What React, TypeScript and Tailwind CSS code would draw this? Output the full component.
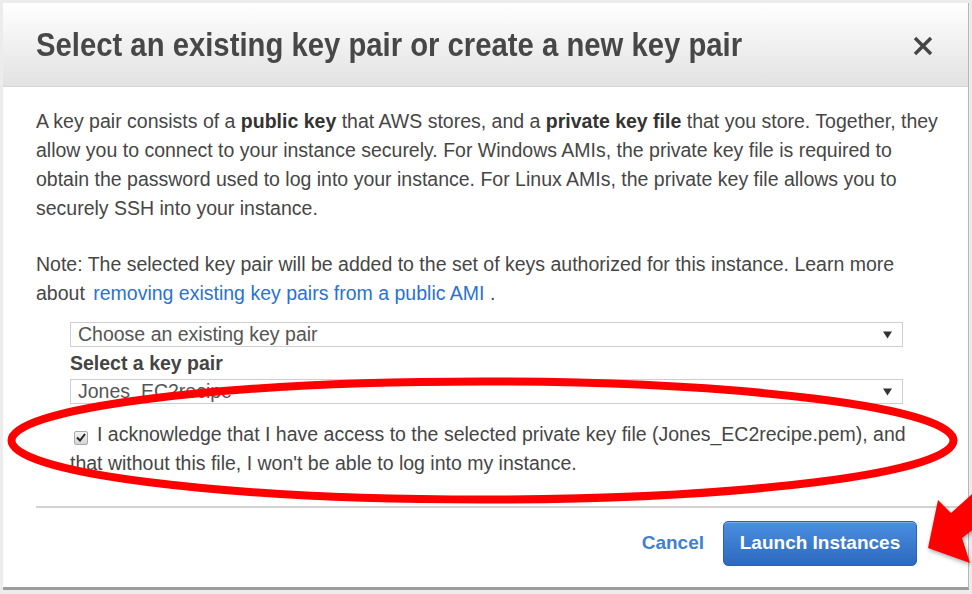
import React from 'react';

const font = { fontFamily: '"Liberation Sans", Arial, Helvetica, sans-serif' };

function Caret() {
  return (
    <svg width="9" height="8" viewBox="0 0 9 8" className="shrink-0">
      <path d="M0 0.5 H9 L4.5 7.5 Z" fill="#333" />
    </svg>
  );
}

function FakeSelect({ value }: { value: string }) {
  return (
    <div className="flex h-[25px] w-[833px] items-center justify-between border border-[#cfcfcf] bg-white pl-[7px] pr-[10px] text-[19.5px] text-[#555]">
      <span className="leading-none">{value}</span>
      <Caret />
    </div>
  );
}

export default function App() {
  return (
    <div className="relative h-[594px] w-[972px] overflow-hidden bg-[#ececec] pl-[3px] pt-[3px]" style={font}>
      <div className="flex h-[587px] w-[966px] flex-col border-r border-b-[3px] border-r-[#b8b8b8] border-b-[#9c9c9c] bg-white">
        {/* header */}
        <div className="flex h-[84px] shrink-0 items-center justify-between border-b border-[#d6d6d6] bg-linear-to-b from-white to-[#e2e2e2] pl-[33px] pr-[35px]">
          <h1 className="inline-block origin-left scale-x-[0.887] whitespace-nowrap text-[33px] font-bold text-[#474747]">
            Select an existing key pair or create a new key pair
          </h1>
          <svg width="20" height="20" viewBox="0 0 20 20" className="mt-[3px]">
            <path d="M2 2 L18 18 M18 2 L2 18" stroke="#454545" strokeWidth="3.4" />
          </svg>
        </div>

        {/* body */}
        <div className="pl-[33px] pt-[20px] text-[19.5px] leading-[29px] text-[#464646]">
          <p className="w-[905px]">
            A key pair consists of a <b className="text-[#333]">public key</b> that AWS stores, and a{' '}
            <b className="text-[#333]">private key file</b> that you store. Together, they allow you to connect to your
            instance securely. For Windows AMIs, the private key file is required to obtain the password used to log
            into your instance. For Linux AMIs, the private key file allows you to securely SSH into your instance.
          </p>
          <p className="mt-[27px] w-[905px]">
            Note: The selected key pair will be added to the set of keys authorized for this instance. Learn more about{' '}
            <a className="ml-[3px] text-[#2a72cf]">removing existing key pairs from a public AMI</a> .
          </p>

          <div className="ml-[34px] mt-[14px]">
            <FakeSelect value="Choose an existing key pair" />
            <div className="text-[19.5px] font-bold leading-[32px] text-[#444]">Select a key pair</div>
            <FakeSelect value="Jones_EC2recipe" />

            <p className="mt-[16px] w-[850px]">
              <span className="ml-[4px] mr-[9px] inline-flex h-[14px] w-[14px] items-center justify-center rounded-[2px] border border-[#a9a9a9] bg-linear-to-b from-[#f2f2f2] to-[#d6d6d6] align-[-1px]">
                <svg width="10" height="9" viewBox="0 0 10 9">
                  <path d="M1 4.5 L4 7.5 L9 1" stroke="#222" strokeWidth="2" fill="none" />
                </svg>
              </span>
              I acknowledge that I have access to the selected private key file (Jones_EC2recipe.pem), and that without
              this file, I won't be able to log into my instance.
            </p>
          </div>
        </div>

        {/* footer */}
        <div className="ml-[33px] mt-[28px] border-t-2 border-[#d2d2d2]" />
        <div className="flex items-center justify-end gap-[19px] pr-[51px] pt-[13px]">
          <button className="text-[19px] font-bold text-[#3f80d3]">Cancel</button>
          <button className="h-[45px] w-[194px] rounded-[5px] border border-[#2c62ad] bg-linear-to-b from-[#4b8fe0] to-[#2c69bf] text-[19px] font-bold text-white shadow-[inset_0_1px_0_rgba(255,255,255,0.25)]">
            Launch Instances
          </button>
        </div>
      </div>

      {/* annotation overlay */}
      <svg className="pointer-events-none absolute left-0 top-0" width="972" height="594" viewBox="0 0 972 594">
        <ellipse cx="482.5" cy="440.5" rx="471" ry="59" fill="none" stroke="#ff0000" strokeWidth="8" />
        <polygon
          points="928,548 938,500 951,513 990,478 1004,506 962,538 970,563"
          fill="#ff0000"
          style={{ filter: 'drop-shadow(1px 2px 2px rgba(0,0,0,0.35))' }}
        />
      </svg>
    </div>
  );
}
